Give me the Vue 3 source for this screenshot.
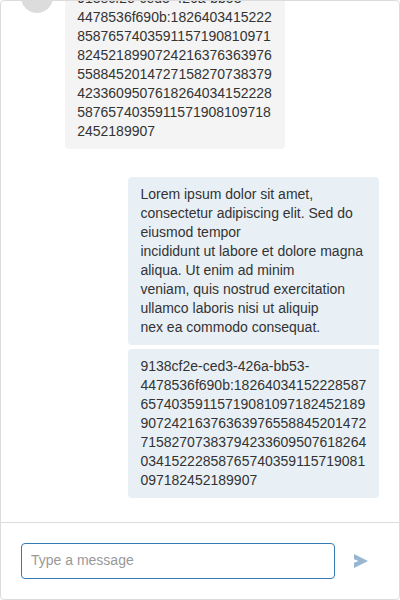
<script setup>
const longId =
  '9138cf2e-ced3-426a-bb53-4478536f690b:1826403415222' +
  '8587657403591157190810971' +
  '8245218990724216376363976' +
  '5588452014727158270738379' +
  '4233609507618264034152228' +
  '5876574035911571908109718' +
  '2452189907'

const lorem =
  'Lorem ipsum dolor sit amet, consectetur adipiscing elit. Sed do eiusmod tempor\n' +
  'incididunt ut labore et dolore magna aliqua. Ut enim ad minim\n' +
  'veniam, quis nostrud exercitation ullamco laboris nisi ut aliquip\n' +
  'nex ea commodo consequat.'
</script>

<template>
  <div class="chat">
    <div class="messages">
      <div class="group">
        <div class="avatar"></div>
        <div class="bubble incoming">{{ longId }}</div>
      </div>
      <div class="group own">
        <div class="bubble outgoing first">{{ lorem }}</div>
        <div class="bubble outgoing last">{{ longId }}</div>
      </div>
    </div>
    <form class="message-box" @submit.prevent>
      <input class="field" type="text" placeholder="Type a message" />
      <button class="send" type="submit" aria-label="Send">
        <svg width="16" height="16" viewBox="0 0 16 16">
          <path d="M1 1L15 8L1 15V9.7L5.5 8L1 6.3Z" />
        </svg>
      </button>
    </form>
  </div>
</template>

<style scoped>
.chat {
  box-sizing: border-box;
  width: 400px;
  height: 600px;
  display: flex;
  flex-direction: column;
  overflow: hidden;
  border: 1px solid #dcdcdc;
  border-radius: 4px;
  background: #fff;
  color: #333;
  font: 14px/19px "Liberation Sans", Arial, sans-serif;
}

.messages {
  flex: 1;
  min-height: 0;
  box-sizing: border-box;
  padding: 0 20px 24px;
  display: flex;
  flex-direction: column;
  justify-content: flex-end;
  gap: 28px;
  overflow: hidden;
}

.group {
  flex: none;
  display: flex;
  align-items: flex-start;
  gap: 12px;
}

.own {
  flex-direction: column;
  align-items: flex-end;
  gap: 4px;
}

.avatar {
  flex: none;
  width: 32px;
  height: 32px;
  border-radius: 50%;
  background: #dcdcdc;
}

.bubble {
  box-sizing: border-box;
  padding: 8px 12px;
  border-radius: 4px;
  white-space: pre-line;
  overflow-wrap: break-word;
}

.incoming {
  width: 220px;
  padding-left: 12.2px;
  background: #f4f4f4;
}

.outgoing {
  width: 250.6px;
  background: #e8f0f6;
}

.first {
  border-bottom-right-radius: 0;
}

.last {
  border-top-right-radius: 0;
}

.message-box {
  flex: none;
  box-sizing: border-box;
  height: 77px;
  padding: 20px;
  display: flex;
  align-items: flex-start;
  gap: 8px;
  border-top: 1px solid #dcdcdc;
}

.field {
  box-sizing: border-box;
  width: 314px;
  height: 36px;
  padding: 0 9px 2px;
  border: 1px solid #337ab7;
  border-radius: 4px;
  outline: none;
  background: #fff;
  color: #333;
  font: inherit;
}

.field::placeholder {
  color: #999;
  opacity: 1;
}

.send {
  width: 36px;
  height: 36px;
  padding: 0;
  display: flex;
  align-items: center;
  justify-content: center;
  border: 0;
  background: none;
}

.send svg {
  display: block;
  fill: #98b6d1;
}
</style>

<style>
body {
  margin: 0;
  background: #fff;
}
</style>
